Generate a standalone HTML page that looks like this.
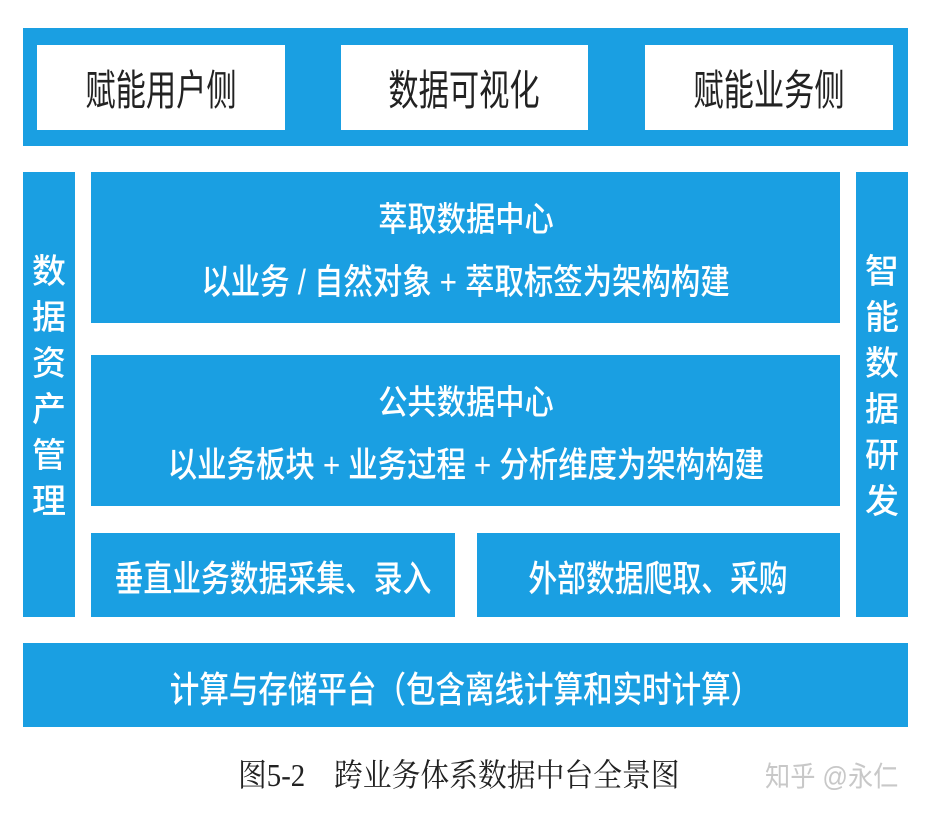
<!DOCTYPE html>
<html><head><meta charset="utf-8"><style>
body{margin:0;width:931px;height:813px;background:#fff;position:relative;overflow:hidden;font-family:"Liberation Sans","Noto Sans CJK SC",sans-serif}
.b{position:absolute;background:#1a9fe2}
.w{position:absolute;background:#fff;display:flex;align-items:center;justify-content:center}
.t{position:absolute;left:-150px;right:-150px;text-align:center;color:#fff;white-space:nowrap;font-weight:500}
.s{display:inline-block}
.v{position:absolute;color:#fff;font-size:34px;line-height:46px;text-align:center;width:100%;font-weight:500}
</style></head><body>
<div class="b" style="left:23px;top:28px;width:885px;height:118px"></div>
<div class="w" style="left:37px;top:45px;width:248px;height:85px"><span class="s" style="font-size:42px;color:#222;transform:scaleX(.72)">赋能用户侧</span></div>
<div class="w" style="left:341px;top:45px;width:247px;height:85px"><span class="s" style="font-size:42px;color:#222;transform:scaleX(.72)">数据可视化</span></div>
<div class="w" style="left:645px;top:45px;width:248px;height:85px"><span class="s" style="font-size:42px;color:#222;transform:scaleX(.72)">赋能业务侧</span></div>

<div class="b" style="left:23px;top:172px;width:52px;height:445px"><div class="v" style="top:77px">数<br>据<br>资<br>产<br>管<br>理</div></div>
<div class="b" style="left:856px;top:172px;width:52px;height:445px"><div class="v" style="top:77px">智<br>能<br>数<br>据<br>研<br>发</div></div>

<div class="b" style="left:91px;top:172px;width:749px;height:151px">
<div class="t" style="top:20px;font-size:34px"><span class="s" style="transform:scaleX(.86)">萃取数据中心</span></div>
<div class="t" style="top:82px;font-size:35px"><span class="s" style="transform:scaleX(.84)">以业务 / 自然对象 + 萃取标签为架构构建</span></div>
</div>
<div class="b" style="left:91px;top:355px;width:749px;height:151px">
<div class="t" style="top:20px;font-size:34px"><span class="s" style="transform:scaleX(.86)">公共数据中心</span></div>
<div class="t" style="top:82px;font-size:35px"><span class="s" style="transform:scaleX(.84)">以业务板块 + 业务过程 + 分析维度为架构构建</span></div>
</div>
<div class="b" style="left:91px;top:533px;width:364px;height:84px"><div class="t" style="top:17px;font-size:36px"><span class="s" style="transform:scaleX(.8)">垂直业务数据采集、录入</span></div></div>
<div class="b" style="left:477px;top:533px;width:363px;height:84px"><div class="t" style="top:17px;font-size:36px"><span class="s" style="transform:scaleX(.8)">外部数据爬取、采购</span></div></div>

<div class="b" style="left:23px;top:643px;width:885px;height:84px"><div class="t" style="top:18px;font-size:36px"><span class="s" style="transform:scaleX(.82)">计算与存储平台（包含离线计算和实时计算）</span></div></div>

<div style="position:absolute;left:238px;top:750px;font-size:32px;color:#222;font-family:'Liberation Serif','Noto Serif CJK SC',serif;white-space:nowrap"><span class="s" style="transform:scaleX(.9);transform-origin:left">图5-2　跨业务体系数据中台全景图</span></div>
<div style="position:absolute;left:765px;top:755px;font-size:28px;color:#c8c8c8;white-space:nowrap"><span class="s" style="transform:scaleX(.9);transform-origin:left">知乎 @永仁</span></div>
</body></html>
